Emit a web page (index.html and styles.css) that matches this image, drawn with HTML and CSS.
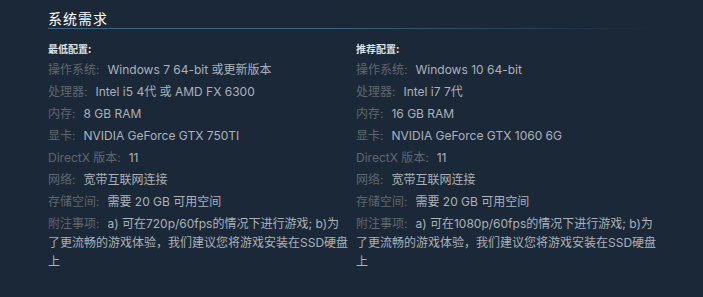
FILE: index.html
```html
<!DOCTYPE html>
<html lang="zh-CN">
<head>
<meta charset="utf-8">
<title>系统需求</title>
<link rel="stylesheet" href="styles.css">
</head>
<body>
<section class="sysreq">
  <h2 class="sysreq-title">系统需求</h2>
  <div class="sysreq-cols">
    <div class="sysreq-col">
      <div class="sysreq-head">最低配置:</div>
      <ul class="sysreq-list">
        <li><span class="lbl">操作系统:</span>Windows 7 64-bit 或更新版本</li>
        <li><span class="lbl">处理器:</span>Intel i5 4代 或 AMD FX 6300</li>
        <li><span class="lbl">内存:</span>8 GB RAM</li>
        <li><span class="lbl">显卡:</span>NVIDIA GeForce GTX 750TI</li>
        <li><span class="lbl">DirectX 版本:</span>11</li>
        <li><span class="lbl">网络:</span>宽带互联网连接</li>
        <li><span class="lbl">存储空间:</span>需要 20 GB 可用空间</li>
        <li><span class="lbl">附注事项:</span>a) 可在720p/60fps的情况下进行游戏; b)为了更流畅的游戏体验，我们建议您将游戏安装在SSD硬盘上</li>
      </ul>
    </div>
    <div class="sysreq-col">
      <div class="sysreq-head">推荐配置:</div>
      <ul class="sysreq-list">
        <li><span class="lbl">操作系统:</span>Windows 10 64-bit</li>
        <li><span class="lbl">处理器:</span>Intel i7 7代</li>
        <li><span class="lbl">内存:</span>16 GB RAM</li>
        <li><span class="lbl">显卡:</span>NVIDIA GeForce GTX 1060 6G</li>
        <li><span class="lbl">DirectX 版本:</span>11</li>
        <li><span class="lbl">网络:</span>宽带互联网连接</li>
        <li><span class="lbl">存储空间:</span>需要 20 GB 可用空间</li>
        <li><span class="lbl">附注事项:</span>a) 可在1080p/60fps的情况下进行游戏; b)为了更流畅的游戏体验，我们建议您将游戏安装在SSD硬盘上</li>
      </ul>
    </div>
  </div>
</section>
</body>
</html>
```

FILE: styles.css
```css
html, body {
  margin: 0;
  padding: 0;
  background: #1b2838;
}

body {
  font-family: "Inter", "Noto Sans CJK SC", sans-serif;
  color: #acb2b8;
}

.sysreq {
  padding: 8px 0 0 48px;
  width: 610px;
}

.sysreq-title {
  margin: 0;
  font-family: "Noto Sans CJK SC", sans-serif;
  font-size: 14px;
  font-weight: normal;
  line-height: 20px;
  letter-spacing: 1px;
  color: #ffffff;
  padding-bottom: 1px;
}

.sysreq-title::after {
  content: "";
  display: block;
  height: 1px;
  width: 604px;
  background: linear-gradient(to right, #3b6885 0%, #3b6885 45%, rgba(59, 104, 133, 0) 100%);
}

.sysreq-cols {
  display: grid;
  grid-template-columns: 302px 302px;
  column-gap: 6px;
  margin-top: 9px;
}

.sysreq-head {
  font-family: "Noto Sans CJK SC", sans-serif;
  font-size: 10px;
  font-weight: bold;
  line-height: 19px;
  color: #dfe3e6;
  margin-bottom: 2px;
}

.sysreq-list {
  list-style: none;
  margin: 0;
  padding: 0;
}

.sysreq-list li {
  font-size: 12px;
  line-height: 19px;
  margin-bottom: 3px;
  color: #acb2b8;
}

.lbl {
  color: #61676d;
  margin-right: 8px;
}
```
